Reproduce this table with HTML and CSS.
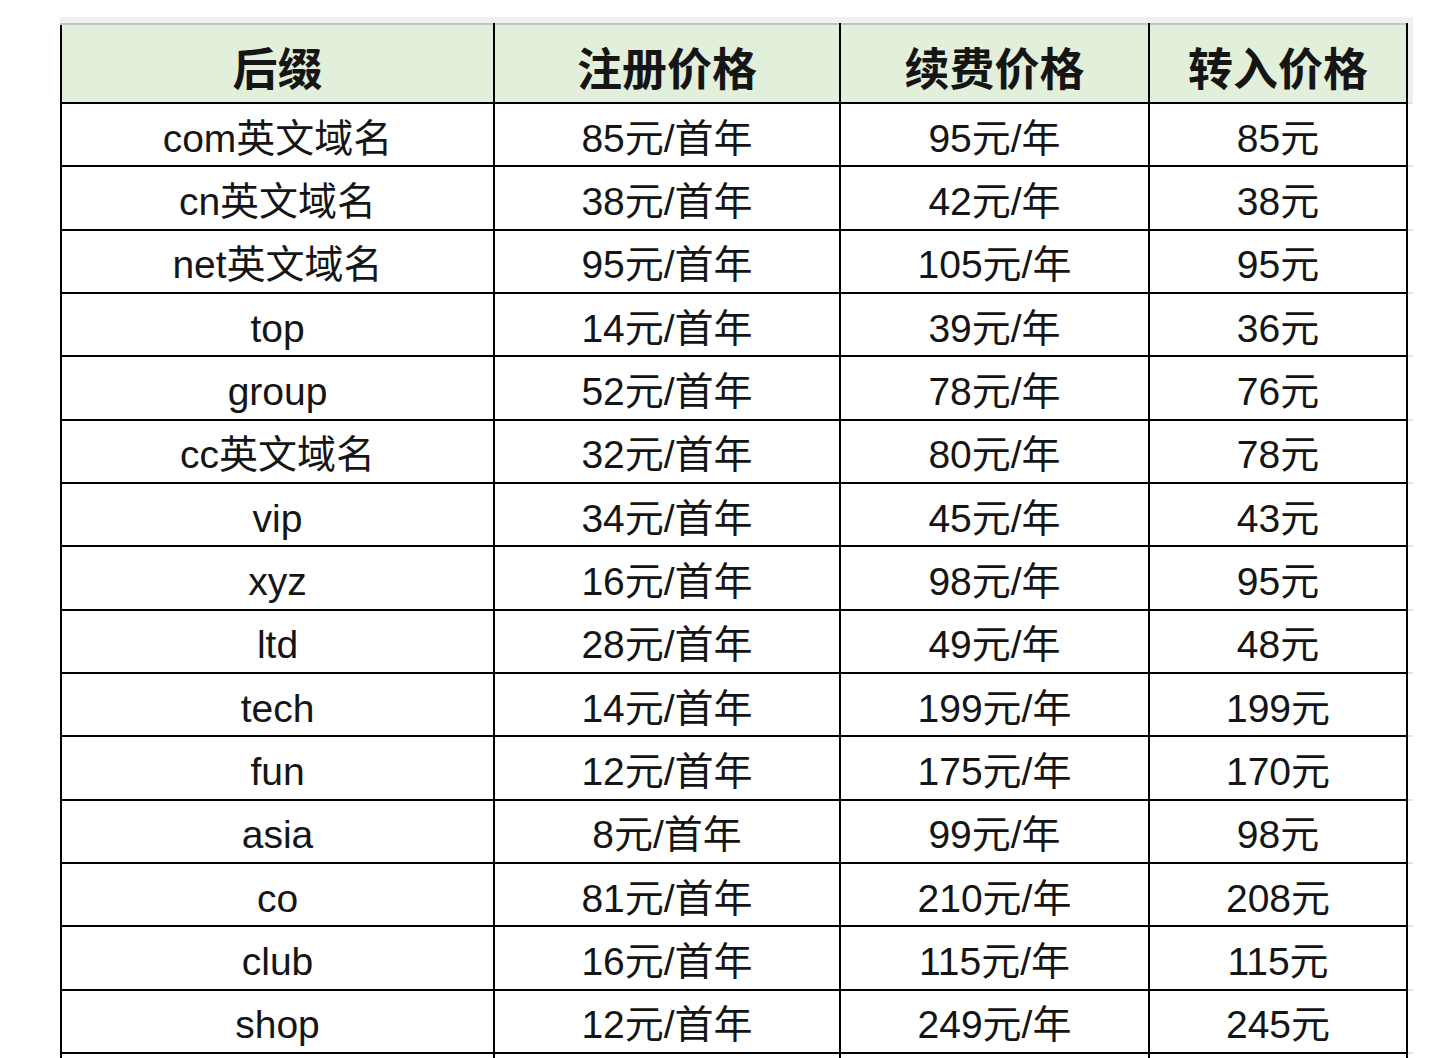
FILE: index.html
```html
<!DOCTYPE html>
<html lang="zh-CN">
<head>
<meta charset="utf-8">
<title>域名价格表</title>
<link rel="stylesheet" href="styles.css">
</head>
<body>
<div class="sheet">
  <div class="band"></div>
  <table class="prices">
    <colgroup>
      <col class="c1"><col class="c2"><col class="c3"><col class="c4"><col class="c5">
    </colgroup>
    <thead>
      <tr><th>后缀</th><th>注册价格</th><th>续费价格</th><th>转入价格</th><th class="edge"></th></tr>
    </thead>
    <tbody>
      <tr><td>com英文域名</td><td>85元/首年</td><td>95元/年</td><td>85元</td><td class="edge"></td></tr>
      <tr><td>cn英文域名</td><td>38元/首年</td><td>42元/年</td><td>38元</td><td class="edge"></td></tr>
      <tr><td>net英文域名</td><td>95元/首年</td><td>105元/年</td><td>95元</td><td class="edge"></td></tr>
      <tr><td>top</td><td>14元/首年</td><td>39元/年</td><td>36元</td><td class="edge"></td></tr>
      <tr><td>group</td><td>52元/首年</td><td>78元/年</td><td>76元</td><td class="edge"></td></tr>
      <tr><td>cc英文域名</td><td>32元/首年</td><td>80元/年</td><td>78元</td><td class="edge"></td></tr>
      <tr><td>vip</td><td>34元/首年</td><td>45元/年</td><td>43元</td><td class="edge"></td></tr>
      <tr><td>xyz</td><td>16元/首年</td><td>98元/年</td><td>95元</td><td class="edge"></td></tr>
      <tr><td>ltd</td><td>28元/首年</td><td>49元/年</td><td>48元</td><td class="edge"></td></tr>
      <tr><td>tech</td><td>14元/首年</td><td>199元/年</td><td>199元</td><td class="edge"></td></tr>
      <tr><td>fun</td><td>12元/首年</td><td>175元/年</td><td>170元</td><td class="edge"></td></tr>
      <tr><td>asia</td><td>8元/首年</td><td>99元/年</td><td>98元</td><td class="edge"></td></tr>
      <tr><td>co</td><td>81元/首年</td><td>210元/年</td><td>208元</td><td class="edge"></td></tr>
      <tr><td>club</td><td>16元/首年</td><td>115元/年</td><td>115元</td><td class="edge"></td></tr>
      <tr><td>shop</td><td>12元/首年</td><td>249元/年</td><td>245元</td><td class="edge"></td></tr>
      <tr><td></td><td></td><td></td><td></td><td class="edge"></td></tr>
    </tbody>
  </table>
</div>
</body>
</html>
```
FILE: styles.css
```css
html, body {
  margin: 0;
  padding: 0;
  background: #ffffff;
}

.sheet {
  padding: 17px 0 0 60px;
  font-family: "Liberation Sans", "Noto Sans CJK SC", sans-serif;
  color: #151515;
}

.band {
  width: 1353px;
  height: 6px;
  background: #f0f0f0;
}

.prices {
  border-collapse: collapse;
  table-layout: fixed;
  width: 1352px;
}

.c1 { width: 433px; }
.c2 { width: 346px; }
.c3 { width: 309px; }
.c4 { width: 258px; }
.c5 { width: 6px; }

.prices th,
.prices td {
  border: 2px solid #000000;
  text-align: center;
  padding: 0;
  white-space: nowrap;
  overflow: hidden;
}

.prices th {
  background: #e2efda;
  border-top: 2px solid #c4c4c4;
  height: 79px;
  font-family: "Noto Sans CJK SC", sans-serif;
  font-size: 45px;
  font-weight: 700;
  line-height: 1;
  padding-top: 5px;
  box-sizing: border-box;
}

.prices td {
  height: 63.33px;
  font-size: 39px;
  font-weight: 400;
  line-height: 1;
  padding-top: 7px;
  box-sizing: border-box;
}

.prices .edge {
  border-left: 2px solid #000000;
  border-right: none;
  border-top: 2px solid #e2e2e2;
  border-bottom: 2px solid #e2e2e2;
  background: #ffffff;
}

.prices th.edge {
  background: #f0f0f0;
  border-top: 2px solid #f0f0f0;
  border-bottom: 2px solid #e2e2e2;
}
```
